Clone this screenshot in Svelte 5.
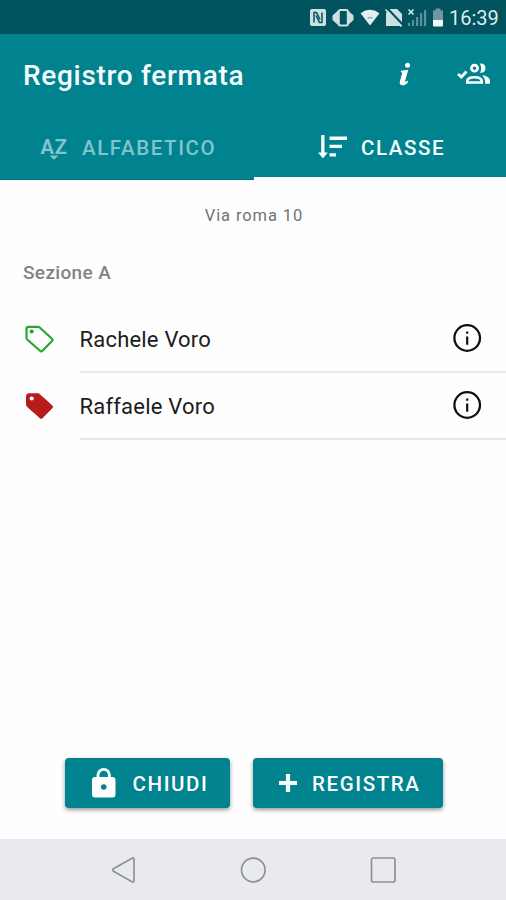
<script lang="ts">
  let stop = "Via roma 10";
  let section = "Sezione A";
  let activeTab = "classe";
  let people = [
    { name: "Rachele Voro", present: true },
    { name: "Raffaele Voro", present: false },
  ];
</script>

<div class="screen">
  <div class="status">
    <svg class="icons" width="122" height="34" viewBox="0 0 122 34" fill="#cfe0e2">
      <!-- nfc -->
      <rect x="0" y="9" width="16" height="17" rx="2" />
      <path d="M4 22.500V12.500h2.500l3.500 7M12 12.500v10H9.500l-3.500-7" fill="none" stroke="#00535f" stroke-width="1.500" />
      <!-- vibrate -->
      <path d="M28 10.500 22.500 15.500v4.500l5.500 5zM38 10.500l5.500 5v4.500l-5.500 5z" />
      <rect x="28.800" y="10" width="9" height="15.500" rx="1.500" fill="#00535f" stroke="#cfe0e2" stroke-width="2" />
      <!-- wifi -->
      <path d="M50.500 13.200Q60 6.500 69.500 13.200L60 25.500z" fill="#e4eff0" />
      <path d="M57.500 18.500q2.500-2 5 0" stroke="#8fb1b5" stroke-width="1.300" fill="none" />
      <!-- no sim -->
      <path d="M80 9h7l5 5v12H76V13z" />
      <path d="M77 8 95 27" stroke="#00535f" stroke-width="2.200" />
      <path d="M75.500 9.500 91.500 26.500" stroke="#cfe0e2" stroke-width="1.800" />
      <!-- signal -->
      <path d="M98.500 9.500l5 5M103.500 9.500l-5 5" stroke="#cfe0e2" stroke-width="1.700" />
      <path d="M98 23h2v3h-2zM102 20h2v6h-2zM106 17h2.200v9H106zM110 13h2.200v13H110zM114 10h2.200v16H114z" fill="#5d9199" />
    </svg>
    <svg class="battery" width="12" height="34" viewBox="0 0 12 34">
      <path d="M3.500 8.500h5v2H11V20H1v-9.500h2.500z" fill="#6f999e" />
      <path d="M1 20h10v5.500q0 1-1 1H2q-1 0-1-1z" fill="#f2f8f8" />
    </svg>
    <span>16:39</span>
  </div>

  <header>
    <div class="toolbar">
      <h1>Registro fermata</h1>
      <svg class="info" width="14" height="26" viewBox="0 0 14 26" fill="#fff">
        <circle cx="9.500" cy="3.200" r="2.500" />
        <path d="M3 8.800 10.300 7.800 7.300 18.200q-.8 3 2.300.6l.8.900Q7.500 23.700 4 23.300q-3.200-.5-2-4.300l2-7.200q.4-1.600-1.300-1.700z" />
      </svg>
      <svg class="group" width="34" height="26" viewBox="0 0 34 26" fill="none" stroke="#fff">
        <path d="M1 12 4.300 15 9.500 9.500" stroke-width="2.800" />
        <circle cx="17.500" cy="6.200" r="3.100" stroke-width="2.600" />
        <path d="M10.200 20.500v-1q0-4.200 7.300-4.200t7.300 4.200v1z" stroke-width="2.600" />
        <path d="M22.800 1.700q5.200-.8 5.700 4.500-.5 5.300-5.700 4.500 3-4.500 0-9zM26.300 13.300q6.700 1.600 6.700 6v2.500h-4.800v-2.600q0-3-2.700-5.400z" fill="#fff" stroke="none" />
      </svg>
    </div>
    <nav class="tabs">
      <button class="tab alpha" class:active={activeTab === "alfabetico"}>
        <svg width="28" height="28" viewBox="0 0 28 28" fill="currentColor">
          <text x="0.500" y="20.500" textLength="26.500">AZ</text>
          <path d="M9.500 22.500h9l-4.500 4.300z" />
        </svg>
        <span>ALFABETICO</span>
      </button>
      <button class="tab class" class:active={activeTab === "classe"}>
        <svg width="30" height="28" viewBox="0 0 30 28" fill="currentColor">
          <path d="M3.200 2h3.300v17.500h3.300L4.900 25.600 0 19.500h3.200zM11.500 3.500H29v3.500H11.500zM11.500 11.700H24V15H11.500zM11.500 20.200h6.500v3.200h-6.500z" />
        </svg>
        <span>CLASSE</span>
      </button>
    </nav>
  </header>

  <main>
    <p class="stop">{stop}</p>
    <h2>{section}</h2>
    <ul>
      {#each people as person}
        <li>
          <svg class="tag" class:present={person.present} width="30" height="30" viewBox="0 0 30 30">
            <path d="M4.500 1.800H14q1 0 1.700.7L28 13.700q1.300 1.200 0 2.300L18.500 25.800q-1.300 1.300-2.500 0L3.200 14.500Q2.500 13.800 2.500 12.800V3.800q0-2 2-2z" />
            <circle cx="7.700" cy="6.500" r="2.100" />
          </svg>
          <div class="row">
            <span>{person.name}</span>
            <svg width="30" height="30" viewBox="0 0 30 30">
              <circle cx="15.200" cy="14" r="12.800" fill="none" stroke="#111" stroke-width="2.300" />
              <path d="M14.100 7.500h2.200v2.200h-2.200zM14.100 12.500h2.200v8.200h-2.200z" fill="#111" />
            </svg>
          </div>
        </li>
      {/each}
    </ul>
  </main>

  <footer>
    <button class="close">
      <svg width="26" height="32" viewBox="0 0 26 32">
        <path d="M7 12V8a5.700 5.700 0 0 1 11.400 0V12" fill="none" stroke="#fff" stroke-width="2.800" />
        <rect x="1" y="10" width="23.500" height="20.500" rx="3" fill="#fff" />
        <circle cx="12.700" cy="20" r="2.800" fill="#00838f" />
      </svg>
      <span>CHIUDI</span>
    </button>
    <button class="register">
      <svg width="18" height="18" viewBox="0 0 18 18">
        <path d="M9 0v18M0 9h18" stroke="#fff" stroke-width="4.200" />
      </svg>
      <span>REGISTRA</span>
    </button>
  </footer>

  <div class="navbar">
    <svg width="26" height="28" viewBox="0 0 26 28">
      <path d="M22 2.200q2-1 2 1v21.600q0 2-2 1L3.500 15.200q-2-1.200 0-2.400z" />
    </svg>
    <svg width="26" height="28" viewBox="0 0 26 28"><circle cx="13.300" cy="14" r="11.800" /></svg>
    <svg width="26" height="28" viewBox="0 0 26 28"><rect x="1.500" y="2" width="23.500" height="24" rx="2" /></svg>
  </div>
</div>

<style>
  :global(body) {
    margin: 0;
  }
  .screen {
    display: flex;
    flex-direction: column;
    width: 506px;
    height: 900px;
    background: #fefefe;
    font-family: Roboto, sans-serif;
    overflow: hidden;
  }
  svg {
    flex: none;
    display: block;
  }
  .status {
    display: flex;
    align-items: center;
    justify-content: flex-end;
    height: 34px;
    padding-right: 8px;
    box-sizing: border-box;
    background: #00535f;
    color: #dcebed;
    font-size: 20px;
    line-height: 34px;
  }
  .battery {
    margin-right: 5px;
  }
  .status span {
    width: 49px;
    white-space: nowrap;
    padding-top: 2px;
  }
  header {
    background: #00838f;
  }
  .toolbar {
    display: flex;
    align-items: center;
    height: 81px;
    padding: 0 15px 0 23px;
  }
  h1 {
    flex: 1;
    margin: 2px 0 0;
    color: #f4fdfd;
    font-size: 28px;
    font-weight: 500;
    letter-spacing: 0.700px;
    white-space: nowrap;
  }
  .info {
    margin-right: 45px;
  }
  .tabs {
    display: flex;
    height: 65px;
  }
  button {
    display: flex;
    align-items: center;
    box-sizing: border-box;
    margin: 0;
    padding: 0;
    border: none;
    background: #00838f;
    color: #fff;
    font-family: inherit;
    font-size: 20.500px;
    font-weight: 500;
    letter-spacing: 1.600px;
    white-space: nowrap;
  }
  button span {
    padding-top: 2px;
  }
  .tab {
    width: 254px;
    height: 65px;
    color: #80c5cc;
    border-bottom: 1px solid #006f7b;
  }
  .tab.active {
    width: 252px;
    color: #f8ffff;
    border-bottom: 3px solid #fff;
    padding-top: 1px;
  }
  .alpha {
    padding-left: 40px;
    gap: 14px;
  }
  .alpha text {
    font-size: 20px;
    font-weight: 700;
    letter-spacing: 0;
  }
  .class {
    padding-left: 64px;
    gap: 13px;
  }
  main {
    flex: 1;
  }
  .stop {
    margin: 26px 0 0;
    padding-left: 2px;
    text-align: center;
    color: #737373;
    font-size: 16.500px;
    line-height: 20px;
    letter-spacing: 0.900px;
  }
  h2 {
    margin: 36px 0 0 23px;
    color: #838383;
    font-size: 19px;
    font-weight: 500;
    line-height: 22px;
    letter-spacing: 0.350px;
  }
  ul {
    margin: 22px 0 0;
    padding: 0;
    list-style: none;
  }
  li {
    display: flex;
    align-items: center;
    height: 67px;
    padding-left: 24px;
  }
  .tag {
    margin-right: 25.500px;
    fill: #b71c1c;
    stroke: #b71c1c;
    stroke-width: 1;
  }
  .tag circle {
    fill: #fff;
    stroke: none;
  }
  .tag.present {
    fill: none;
    stroke: #27a82d;
    stroke-width: 2.200;
  }
  .tag.present circle {
    fill: #27a82d;
  }
  .row {
    flex: 1;
    display: flex;
    align-items: center;
    justify-content: space-between;
    height: 67px;
    padding-right: 24px;
    box-sizing: border-box;
    border-bottom: 2px solid #e7e7e7;
    color: #1c1c1c;
    font-size: 22px;
    letter-spacing: 0.200px;
  }
  .row span {
    padding-top: 1px;
  }
  footer {
    display: flex;
    gap: 23px;
    padding: 0 0 31px 65px;
  }
  footer button {
    height: 50px;
    border-radius: 4px;
    box-shadow: 0 2px 4px rgba(0, 0, 0, 0.4);
  }
  .close {
    width: 165px;
    padding-left: 26px;
    gap: 15.500px;
  }
  .register {
    width: 190px;
    padding-left: 26px;
    gap: 15px;
  }
  .navbar {
    display: flex;
    align-items: center;
    justify-content: center;
    gap: 104px;
    height: 61px;
    background: #e8eaed;
  }
  .navbar svg {
    fill: none;
    stroke: #8f9295;
    stroke-width: 1.700;
  }
</style>
